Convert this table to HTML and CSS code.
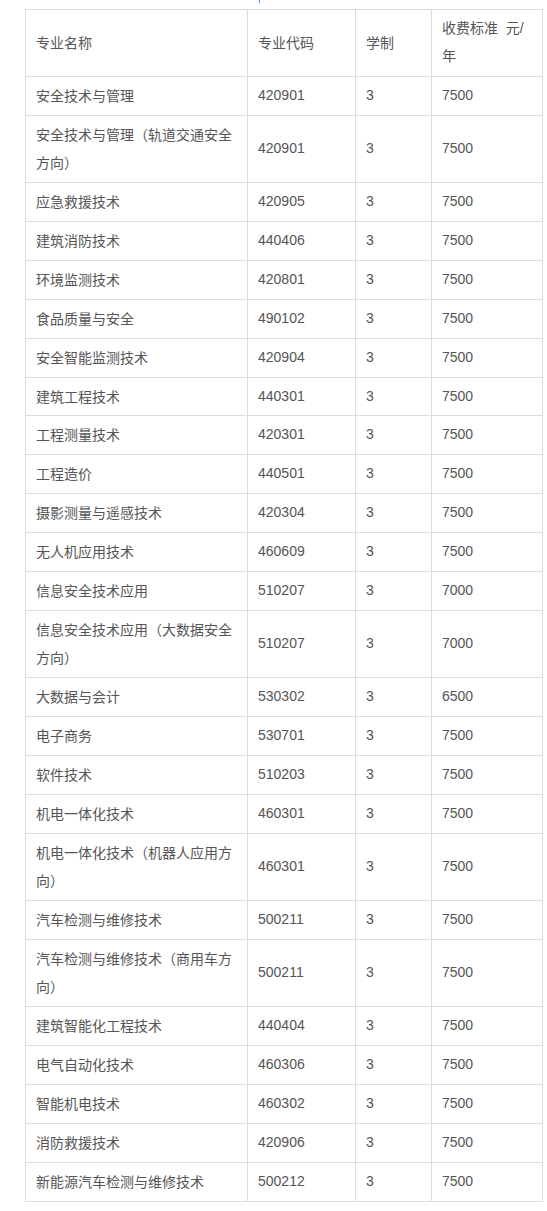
FILE: index.html
```html
<!DOCTYPE html>
<html lang="zh-CN">
<head>
<meta charset="utf-8">
<title>专业收费标准</title>
<link rel="stylesheet" href="styles.css">
</head>
<body>
<div class="page">
  <div class="cut"><span class="tick"></span></div>
  <table class="fees">
    <colgroup>
      <col class="c1"><col class="c2"><col class="c3"><col class="c4">
    </colgroup>
    <tr><td class="name">专业名称</td><td class="name">专业代码</td><td class="name">学制</td><td>收费标准&nbsp; 元/年</td></tr>
    <tr><td class="name">安全技术与管理</td><td>420901</td><td>3</td><td>7500</td></tr>
    <tr><td class="name">安全技术与管理（轨道交通安全方向）</td><td>420901</td><td>3</td><td>7500</td></tr>
    <tr><td class="name">应急救援技术</td><td>420905</td><td>3</td><td>7500</td></tr>
    <tr><td class="name">建筑消防技术</td><td>440406</td><td>3</td><td>7500</td></tr>
    <tr><td class="name">环境监测技术</td><td>420801</td><td>3</td><td>7500</td></tr>
    <tr><td class="name">食品质量与安全</td><td>490102</td><td>3</td><td>7500</td></tr>
    <tr><td class="name">安全智能监测技术</td><td>420904</td><td>3</td><td>7500</td></tr>
    <tr><td class="name">建筑工程技术</td><td>440301</td><td>3</td><td>7500</td></tr>
    <tr><td class="name">工程测量技术</td><td>420301</td><td>3</td><td>7500</td></tr>
    <tr><td class="name">工程造价</td><td>440501</td><td>3</td><td>7500</td></tr>
    <tr><td class="name">摄影测量与遥感技术</td><td>420304</td><td>3</td><td>7500</td></tr>
    <tr><td class="name">无人机应用技术</td><td>460609</td><td>3</td><td>7500</td></tr>
    <tr><td class="name">信息安全技术应用</td><td>510207</td><td>3</td><td>7000</td></tr>
    <tr><td class="name">信息安全技术应用（大数据安全方向）</td><td>510207</td><td>3</td><td>7000</td></tr>
    <tr><td class="name">大数据与会计</td><td>530302</td><td>3</td><td>6500</td></tr>
    <tr><td class="name">电子商务</td><td>530701</td><td>3</td><td>7500</td></tr>
    <tr><td class="name">软件技术</td><td>510203</td><td>3</td><td>7500</td></tr>
    <tr><td class="name">机电一体化技术</td><td>460301</td><td>3</td><td>7500</td></tr>
    <tr><td class="name">机电一体化技术（机器人应用方向）</td><td>460301</td><td>3</td><td>7500</td></tr>
    <tr><td class="name">汽车检测与维修技术</td><td>500211</td><td>3</td><td>7500</td></tr>
    <tr><td class="name">汽车检测与维修技术（商用车方向）</td><td>500211</td><td>3</td><td>7500</td></tr>
    <tr><td class="name">建筑智能化工程技术</td><td>440404</td><td>3</td><td>7500</td></tr>
    <tr><td class="name">电气自动化技术</td><td>460306</td><td>3</td><td>7500</td></tr>
    <tr><td class="name">智能机电技术</td><td>460302</td><td>3</td><td>7500</td></tr>
    <tr><td class="name">消防救援技术</td><td>420906</td><td>3</td><td>7500</td></tr>
    <tr><td class="name">新能源汽车检测与维修技术</td><td>500212</td><td>3</td><td>7500</td></tr>
  </table>
</div>
</body>
</html>
```

FILE: styles.css
```css
html, body {
  margin: 0;
  padding: 0;
  background: #ffffff;
}

.page {
  padding-left: 25px;
  font-family: "Liberation Sans", "Noto Sans CJK SC", sans-serif;
  font-size: 14px;
  color: #555555;
}

.cut {
  height: 9px;
}

.tick {
  display: block;
  width: 1px;
  height: 3px;
  margin-left: 234px;
  background: #3a8ee6;
}

.fees {
  border-collapse: collapse;
  table-layout: fixed;
  width: 518px;
}

.c1 { width: 222px; }
.c2 { width: 108px; }
.c3 { width: 76px; }
.c4 { width: 111px; }

.fees td {
  border: 1px solid #dddddd;
  padding: 5px 10px;
  line-height: 27.95px;
  vertical-align: middle;
  word-break: break-all;
}

.fees td.name {
  font-family: "Noto Sans CJK SC", "Liberation Sans", sans-serif;
}
```
